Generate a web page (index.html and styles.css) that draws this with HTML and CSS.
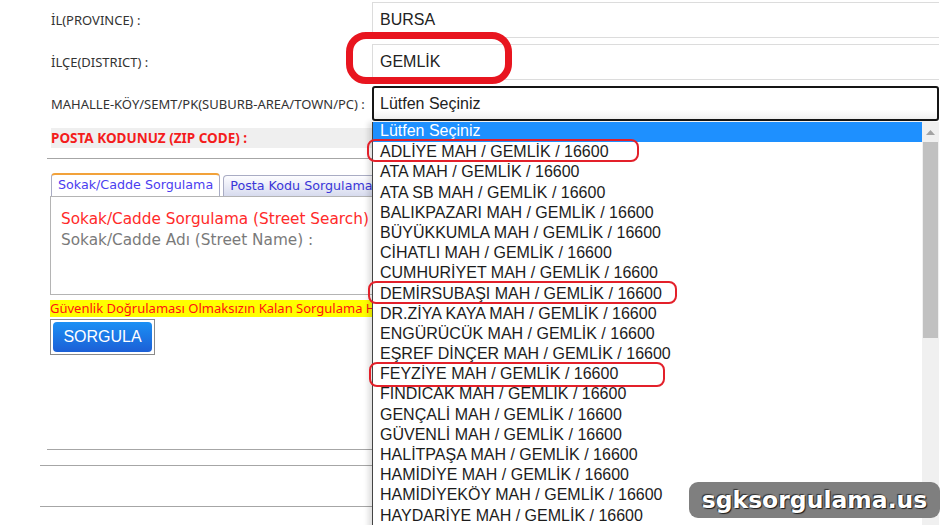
FILE: index.html
```html
<!DOCTYPE html>
<html>
<head>
    <title>Posta Kodu Sorgulama</title>
    <link rel="stylesheet" href="styles.css">
</head>
<body>
    <div class="page">
        <div class="left-col">
            <div class="label-row">İL(PROVINCE) :</div>
            <div class="label-row">İLÇE(DISTRICT) :</div>
            <div class="label-row">MAHALLE-KÖY/SEMT/PK(SUBURB-AREA/TOWN/PC) :</div>
            <div class="zip-band">POSTA KODUNUZ (ZIP CODE) :</div>
            <div class="rule rule-first"></div>

            <div class="tabs">
                <div class="tab tab-active">Sokak/Cadde Sorgulama</div>
                <div class="tab">Posta Kodu Sorgulama</div>
            </div>
            <div class="tab-panel">
                <div class="panel-title">Sokak/Cadde Sorgulama (Street Search)</div>
                <div class="panel-label">Sokak/Cadde Adı (Street Name) :</div>
            </div>
            <div class="warning">Güvenlik Doğrulaması Olmaksızın Kalan Sorgulama Hakkınız</div>
            <div class="btn-frame"><button class="btn">SORGULA</button></div>

            <div class="rule rule-a"></div>
            <div class="rule rule-b"></div>
            <div class="rule rule-c"></div>
        </div>

        <div class="right-col">
            <div class="field">BURSA</div>
            <div class="field">GEMLİK</div>
            <div class="field field-select">Lütfen Seçiniz</div>
            <div class="dropdown">
                <div class="options">
                    <div class="opt opt-selected">Lütfen Seçiniz</div>
                    <div class="opt">ADLİYE MAH / GEMLİK / 16600</div>
                    <div class="opt">ATA MAH / GEMLİK / 16600</div>
                    <div class="opt">ATA SB MAH / GEMLİK / 16600</div>
                    <div class="opt">BALIKPAZARI MAH / GEMLİK / 16600</div>
                    <div class="opt">BÜYÜKKUMLA MAH / GEMLİK / 16600</div>
                    <div class="opt">CİHATLI MAH / GEMLİK / 16600</div>
                    <div class="opt">CUMHURİYET MAH / GEMLİK / 16600</div>
                    <div class="opt">DEMİRSUBAŞI MAH / GEMLİK / 16600</div>
                    <div class="opt">DR.ZİYA KAYA MAH / GEMLİK / 16600</div>
                    <div class="opt">ENGÜRÜCÜK MAH / GEMLİK / 16600</div>
                    <div class="opt">EŞREF DİNÇER MAH / GEMLİK / 16600</div>
                    <div class="opt">FEYZİYE MAH / GEMLİK / 16600</div>
                    <div class="opt">FINDICAK MAH / GEMLİK / 16600</div>
                    <div class="opt">GENÇALİ MAH / GEMLİK / 16600</div>
                    <div class="opt">GÜVENLİ MAH / GEMLİK / 16600</div>
                    <div class="opt">HALİTPAŞA MAH / GEMLİK / 16600</div>
                    <div class="opt">HAMİDİYE MAH / GEMLİK / 16600</div>
                    <div class="opt">HAMİDİYEKÖY MAH / GEMLİK / 16600</div>
                    <div class="opt">HAYDARİYE MAH / GEMLİK / 16600</div>
                    <div class="opt">HİSAR MAH / GEMLİK / 16600</div>
                </div>
                <div class="scrollbar">
                    <div class="scroll-arrow">
                        <svg width="9" height="5" viewBox="0 0 9 5"><path d="M0 5 L4.5 0 L9 5 Z" fill="#a3a3a3"/></svg>
                    </div>
                    <div class="scroll-thumb"></div>
                </div>
            </div>
        </div>
    </div>

    <!-- isaretler (ekran goruntusu uzerindeki kirmizi cerceveler) -->
    <div class="mark mark-big"></div>
    <div class="mark mark-1"></div>
    <div class="mark mark-2"></div>
    <div class="mark mark-3"></div>

    <div class="watermark">sgksorgulama.us</div>
</body>
</html>
```

FILE: styles.css
```css
body {
    margin: 0;
    font-family: "Noto Sans", Arial, sans-serif;
    background: #fff;
    overflow: hidden;
    height: 525px;
}
.page {
    display: flex;
    padding-top: 2px;
    margin-left: 40px;
}
.left-col {
    width: 332px;
}
.right-col {
    width: 567px;
}

/* sol etiketler */
.label-row {
    height: 36px;
    margin-bottom: 6px;
    padding-left: 11px;
    display: flex;
    align-items: center;
    font-size: 13px;
    color: #333;
    white-space: nowrap;
}
.zip-band {
    margin: 5px 0 0 11px;
    height: 20px;
    line-height: 20px;
    background: #efefef;
    color: #f41c1c;
    font-weight: bold;
    font-size: 13.5px;
}
.rule {
    border-top: 1px solid #a6a6a6;
}
.rule-first {
    margin: 10px 0 0 7px;
}
.rule-a {
    margin: 94px 0 0 7px;
}
.rule-b {
    margin-top: 15px;
}
.rule-c {
    margin-top: 40px;
}

/* sekmeler */
.tabs {
    display: flex;
    margin: 15px 0 0 11px;
    gap: 3px;
    height: 22px;
    align-items: flex-end;
}
.tab {
    height: 20px;
    line-height: 20px;
    padding: 0 6px;
    font-family: "DejaVu Sans", Verdana, sans-serif;
    font-size: 12.7px;
    color: #3a36d8;
    border: 1px solid #a9acc4;
    border-bottom: none;
    border-radius: 4px 4px 0 0;
    background: linear-gradient(#fdfdff, #d7dbee);
    white-space: nowrap;
}
.tab-active {
    height: 21px;
    border-top: 2px solid #f2a23a;
    background: #fff;
    color: #4a3df0;
}
.tab-panel {
    box-sizing: border-box;
    margin-left: 10px;
    height: 99px;
    border: 1px solid #b4b4b4;
    border-width: 1px 0 1px 1px;
    padding: 12px 0 0 10px;
    font-family: "DejaVu Sans", Verdana, sans-serif;
    font-size: 15.3px;
    line-height: 21px;
    white-space: nowrap;
    overflow: hidden;
}
.panel-title {
    color: #ff2a2a;
}
.panel-label {
    color: #7a7a7a;
}
.warning {
    margin: 5px 0 0 10px;
    height: 17px;
    line-height: 17px;
    background: #ffff00;
    color: #ff1010;
    font-size: 13px;
    white-space: nowrap;
    overflow: hidden;
}
.btn-frame {
    margin: 2px 0 0 10px;
    border: 1px solid #8a8a8a;
    padding: 2px;
    width: 99px;
    height: 30px;
}
.btn {
    width: 100%;
    height: 100%;
    border: none;
    border-radius: 4px;
    background: linear-gradient(#1b90f5, #1c5fd6);
    color: #fff;
    font-family: "Liberation Sans", Arial, sans-serif;
    font-size: 16px;
    padding: 0;
}

/* sag alanlar */
.field {
    height: 36px;
    margin-bottom: 6px;
    box-sizing: border-box;
    border: 1px solid #dcdcdc;
    border-right: none;
    padding-left: 7px;
    display: flex;
    align-items: center;
    font-family: "Liberation Sans", Arial, sans-serif;
    font-size: 16px;
    color: #222;
}
.field-select {
    height: 35px;
    margin-bottom: 1px;
    border: 2px solid #151515;
    border-radius: 3px;
    padding-left: 6px;
    background: linear-gradient(#fff 70%, #f0f0f0);
}
.dropdown {
    display: flex;
    height: 420px;
    border-left: 1px solid #444;
    box-shadow: -4px 0 5px rgba(0, 0, 0, 0.12);
    background: #fff;
}
.options {
    flex: 1;
}
.opt {
    height: 20.2px;
    line-height: 20px;
    padding-left: 7px;
    font-family: "Liberation Sans", Arial, sans-serif;
    font-size: 16px;
    color: #1c1c1c;
    white-space: nowrap;
}
.opt-selected {
    background: #1e90ff;
    color: #fff;
    line-height: 18px;
}
.scrollbar {
    width: 17px;
    background: #f0f0f0;
}
.scroll-arrow {
    height: 20px;
    display: flex;
    align-items: center;
    justify-content: center;
}
.scroll-thumb {
    margin: 0 1px;
    height: 196px;
    background: #c1c1c1;
}

/* kirmizi isaretler */
.mark {
    position: absolute;
    border: 2px solid #e3202a;
    border-radius: 8px;
}
.mark-big {
    left: 346px;
    top: 32px;
    width: 152px;
    height: 38px;
    border: 7px solid #e8151f;
    border-radius: 20px;
}
.mark-1 {
    left: 367px;
    top: 139px;
    width: 268px;
    height: 19px;
}
.mark-2 {
    left: 368px;
    top: 281px;
    width: 305px;
    height: 19px;
}
.mark-3 {
    left: 369px;
    top: 362px;
    width: 292px;
    height: 21px;
}

.watermark {
    position: absolute;
    left: 689px;
    top: 482px;
    width: 251px;
    height: 36px;
    border-radius: 9px;
    background: #7f7f7f;
    color: #fff;
    font-family: "DejaVu Sans", sans-serif;
    font-weight: bold;
    font-size: 23.5px;
    line-height: 36px;
    text-align: center;
    text-shadow: 1px 1px 1px #1a1a1a, -1px -1px 1px #333;
}
```
